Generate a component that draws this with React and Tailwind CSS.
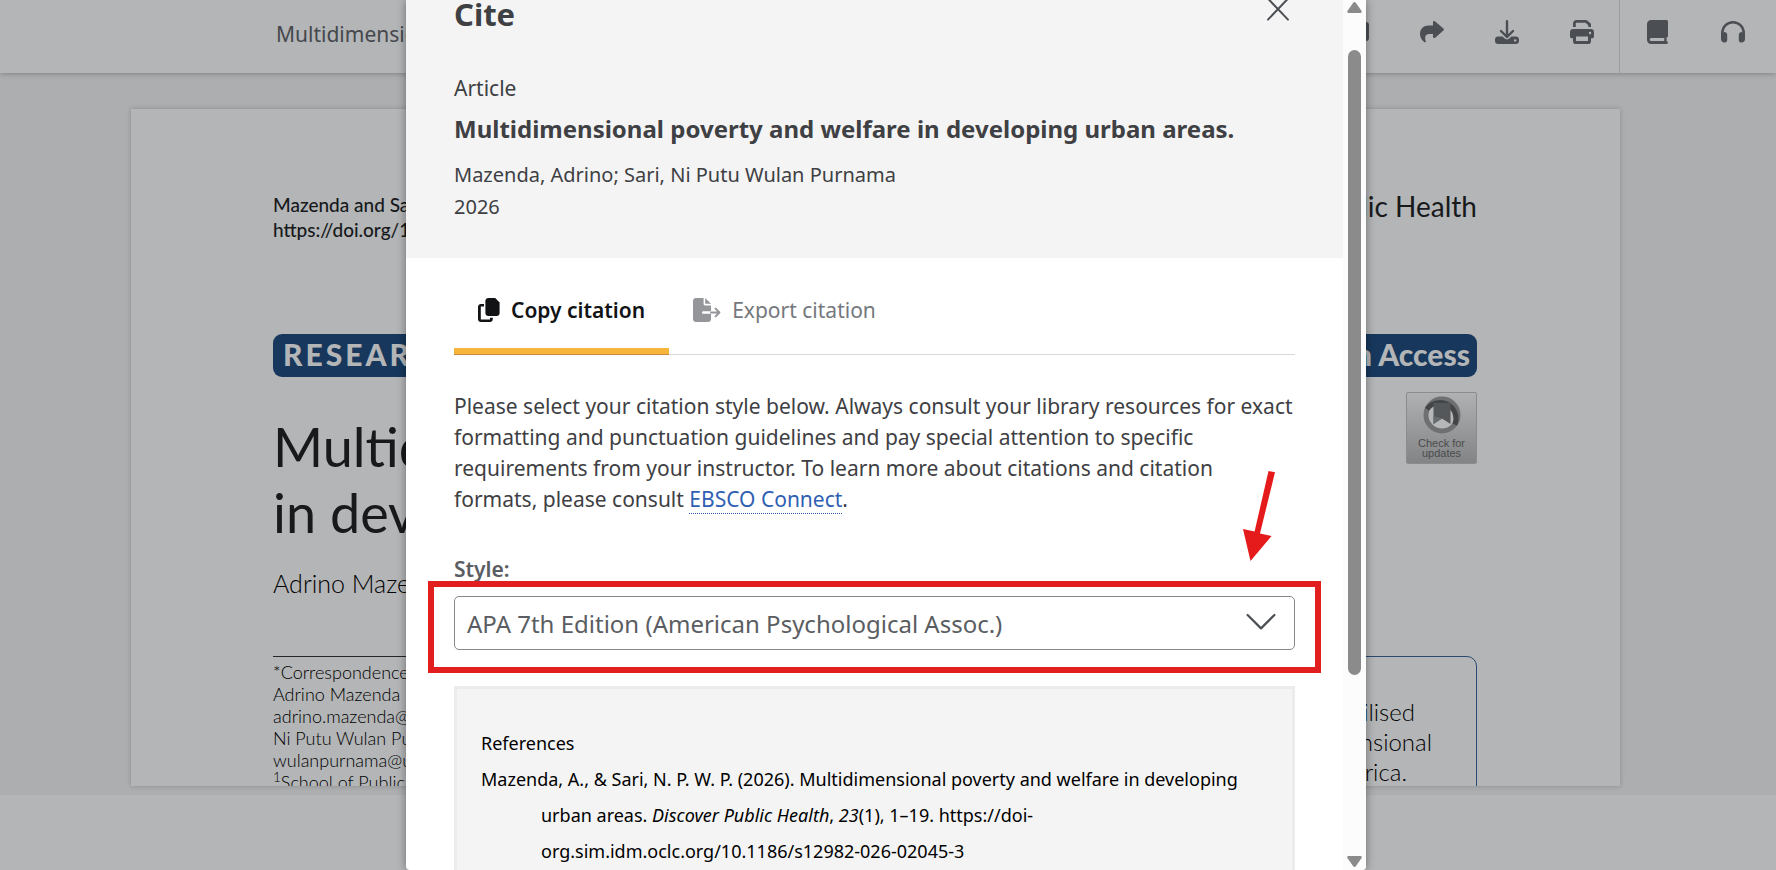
function ShareIcon() {
  return (
    <svg width="24" height="22" viewBox="0 0 24 22" fill="currentColor" aria-hidden="true">
      <path d="M13.2 0.6 C13.8 -0.1 14.6 0 15.2 0.5 L23.4 7.6 C24.1 8.2 24.1 9 23.4 9.6 L15.2 16.8 C14.4 17.4 13 17 13 15.8 V13 H9.5 C6 13 4.7 15.2 5.3 18.4 C5.5 19.6 6 20.4 5.7 21 C5.4 21.5 4.8 21.5 4.2 21 C1.4 18.9 0 16 0 12.8 C0 7.8 3.6 4.5 9 4.5 H13 V1.6 C13 1.2 13 0.9 13.2 0.6 Z" />
    </svg>
  );
}

function DownloadIcon() {
  return (
    <svg width="24" height="24" viewBox="0 0 24 24" aria-hidden="true">
      <path d="M12 1.2 V16 M6 11 L12 17 L18 11" fill="none" stroke="currentColor" strokeWidth="2.4" strokeLinecap="round" strokeLinejoin="round" />
      <path fillRule="evenodd" fill="currentColor" d="M3 16.5 H7.6 L9.4 18.3 C11 19.8 13 19.8 14.6 18.3 L16.4 16.5 H21 C22.7 16.5 24 17.8 24 19.4 V21 C24 22.7 22.7 24 21 24 H3 C1.3 24 0 22.7 0 21 V19.4 C0 17.8 1.3 16.5 3 16.5 Z M20.2 19.2 A1.2 1.2 0 1 0 20.2 21.6 A1.2 1.2 0 1 0 20.2 19.2 Z" />
    </svg>
  );
}

function PrintIcon() {
  return (
    <svg width="24" height="24" viewBox="0 0 24 24" aria-hidden="true">
      <path d="M4.4 7 V3.6 C4.4 2.1 5.4 1.4 6.8 1.4 H16 L19.6 4.4 V7" fill="none" stroke="currentColor" strokeWidth="2.8" strokeLinecap="butt" strokeLinejoin="round" />
      <path fillRule="evenodd" fill="currentColor" d="M3 9 H21 C22.7 9 24 10.3 24 12 V16.6 C24 17.6 23.2 18.2 22.4 18.2 H21 V21.4 C21 22.9 19.9 24 18.4 24 H5.6 C4.1 24 3 22.9 3 21.4 V18.2 H1.6 C0.8 18.2 0 17.6 0 16.6 V12 C0 10.3 1.3 9 3 9 Z M6 16.4 V21 H18 V16.4 Z M20 11.8 A1.2 1.2 0 1 0 20 14.2 A1.2 1.2 0 1 0 20 11.8 Z" />
    </svg>
  );
}

function BookIcon() {
  return (
    <svg width="21" height="24" viewBox="0 0 21 24" aria-hidden="true">
      <path fillRule="evenodd" fill="currentColor" d="M4 0 H19.4 C20.4 0 21 0.7 21 1.6 V15.8 C21 16.8 20.4 17.4 19.6 17.6 V21.2 C20.6 21.4 21 21.9 21 22.6 C21 23.4 20.4 24 19.6 24 H4 C1.8 24 0 22.3 0 20 V4 C0 1.8 1.8 0 4 0 Z M4.2 18 C2.3 18 2.3 21.1 4.2 21.1 H17.2 V18 Z" />
    </svg>
  );
}

function HeadphonesIcon() {
  return (
    <svg width="24" height="22" viewBox="0 0 24 22" aria-hidden="true">
      <path d="M1.2 16 V12.2 C1.2 6 6 1.2 12 1.2 C18 1.2 22.8 6 22.8 12.2 V16" fill="none" stroke="currentColor" strokeWidth="2.4" />
      <path fill="currentColor" d="M3 11 C5 11 6.2 12.2 6.2 13.8 V19 C6.2 20.6 5 21.6 3.4 21.6 C1.4 21.6 0 20 0 18 V14 Z M21 11 C19 11 17.8 12.2 17.8 13.8 V19 C17.8 20.6 19 21.6 20.6 21.6 C22.6 21.6 24 20 24 18 V14 Z" />
    </svg>
  );
}

function FolderIcon() {
  return (
    <svg width="24" height="20" viewBox="0 0 24 20" aria-hidden="true">
      <rect x="0" y="0" width="24" height="19" rx="3" fill="currentColor" />
    </svg>
  );
}

function CopyIcon() {
  return (
    <svg width="22" height="24" viewBox="0 0 22 24" aria-hidden="true">
      <path fill="currentColor" d="M10.4 0 H17.2 L21.6 4.4 V15 C21.6 16.7 20.3 18 18.6 18 H10.4 C8.7 18 7.4 16.7 7.4 15 V3 C7.4 1.3 8.7 0 10.4 0 Z" />
      <path fill="currentColor" d="M3 6 H6 V8.6 H2.8 V21.4 H12 V19.8 H14.8 V21 C14.8 22.7 13.6 24 12 24 H3 C1.3 24 0 22.7 0 21 V9 C0 7.3 1.3 6 3 6 Z" />
    </svg>
  );
}

function ExportIcon() {
  return (
    <svg width="28" height="24" viewBox="0 0 28 24" aria-hidden="true">
      <path fill="currentColor" d="M3 0 H10.6 V6 C10.6 6.8 11.2 7.4 12 7.4 H18 V13.2 H10 C8.6 13.2 8.6 15.8 10 15.8 H18 V21 C18 22.7 16.7 24 15 24 H3 C1.3 24 0 22.7 0 21 V3 C0 1.3 1.3 0 3 0 Z M12.2 0 L18 5.8 H12.2 Z" />
      <path d="M18 14.5 H26 M22.6 10.6 L26.4 14.5 L22.6 18.4" fill="none" stroke="currentColor" strokeWidth="2" strokeLinecap="round" strokeLinejoin="round" />
    </svg>
  );
}

function UpdatesBadge() {
  return (
    <button className="flex h-[72px] w-[71px] flex-col items-center rounded-[2px] border border-[#8b8c8d] bg-linear-to-b from-[#b0b1b2] to-[#838485] pt-[3px] font-['Liberation_Sans',sans-serif] text-[11px] leading-[10px] text-[#4a4b4c]">
      <svg width="38" height="38" viewBox="0 0 38 38" aria-hidden="true">
        <circle cx="19" cy="19" r="14" fill="#b6b7b8" />
        <circle cx="19" cy="19" r="16" fill="none" stroke="#6f7072" strokeWidth="5" />
        <path d="M4 13.2 A16 16 0 0 1 31.8 28.6" fill="none" stroke="#434547" strokeWidth="5" />
        <path d="M10.5 7 H27.5 V28 L19 22.5 L10.5 28 Z" fill="#55585a" />
        <path d="M10.5 20 L19 22.5 L10.5 28 Z" fill="#696c6e" />
      </svg>
      <span className="pt-1">Check for</span>
      <span>updates</span>
    </button>
  );
}

function ToolButton({ label, children }) {
  return (
    <button aria-label={label} className="flex h-16 w-[75px] items-center justify-center">
      {children}
    </button>
  );
}

function Toolbar() {
  return (
    <header className="relative flex h-[73px] shrink-0 justify-between bg-[#b3b5b7] pr-[6px] text-[#4b4f54] shadow-[0_1px_5px_rgba(0,0,0,0.25)]">
      <p className="pt-[18px] pl-[276px] text-[21px] leading-8 text-[#45484c]">
        Multidimensional poverty and welfare in developing urban areas.
      </p>
      <div className="flex">
        <ToolButton label="Add to project"><FolderIcon /></ToolButton>
        <ToolButton label="Share"><ShareIcon /></ToolButton>
        <ToolButton label="Download"><DownloadIcon /></ToolButton>
        <ToolButton label="Print"><PrintIcon /></ToolButton>
        <div className="flex border-l border-[#9c9ea0]">
          <ToolButton label="Contents"><BookIcon /></ToolButton>
          <ToolButton label="Listen"><HeadphonesIcon /></ToolButton>
        </div>
      </div>
    </header>
  );
}

function ArticlePage() {
  return (
    <main className="flex min-h-0 flex-1 flex-col bg-[#adaeb0] pt-9 pr-[156px] pb-[9px] pl-[131px]">
      <article className="min-h-0 flex-1 overflow-hidden bg-[#b3b5b7] pr-[143px] pl-[142px] font-['Lato','Noto_Sans',sans-serif] text-[#17191b] shadow-[0_0_5px_rgba(0,0,0,0.2)]">
        <div className="flex justify-between pt-[83px]">
          <p className="text-[19px] leading-[25px] font-medium">
            Mazenda and Sari Discover Public Health
            <br />
            https://doi.org/10.1186/s12982-026-02045-3
          </p>
          <p className="text-[28px] leading-7">Discover Public Health</p>
        </div>
        <div className="mt-[92px] flex h-[43px] items-center justify-between rounded-[9px] bg-[#17385c] pr-[7px] pb-[2px] pl-[10px] text-[30px] font-black text-[#b3b5b7]">
          <span className="tracking-[3px]">RESEARCH</span>
          <span>Open Access</span>
        </div>
        <div className="mt-[15px] flex items-start justify-between">
          <h1 className="pt-[22px] text-[54px] leading-[66px]">
            Multidimensional poverty and welfare
            <br />
            in developing urban areas
          </h1>
          <UpdatesBadge />
        </div>
        <p className="mt-[21px] text-[25px] leading-[32px] font-light text-black">Adrino Mazenda and Ni Putu Wulan Purnama Sari</p>
        <div className="mt-[57px] flex items-start justify-between text-black">
          <address className="w-[420px] border-t border-[#25282b] pt-1 text-[18px] leading-[22px] font-light not-italic">
            *Correspondence:
            <br />
            Adrino Mazenda
            <br />
            adrino.mazenda@up.ac.za
            <br />
            Ni Putu Wulan Purnama Sari
            <br />
            wulanpurnama@ukwms.ac.id
            <br />
            <sup>1</sup>School of Public Management
          </address>
          <div className="h-60 w-[720px] rounded-[10px] border border-[#2b4a6e] pt-10 pr-[44px] text-right text-[24px] leading-[30px] font-light">
            <p className="pr-[17px]">utilised</p>
            <p>multidimensional</p>
            <p className="pr-[25px]">South Africa.</p>
          </div>
        </div>
      </article>
    </main>
  );
}

function CiteDialog() {
  return (
    <section role="dialog" aria-label="Cite" className="flex w-[960px] overflow-hidden rounded-b-[4px] bg-white shadow-[0_0_10px_rgba(0,0,0,0.4)]">
      <div className="min-w-0 flex-1">
        <div className="bg-[#f4f4f4] px-12 pb-[35px] text-[20px] leading-8 text-[#3e4043]">
          <div className="flex items-start justify-between">
            <h2 className="text-[31px] leading-7 font-bold">Cite</h2>
            <button aria-label="Close" className="mr-[5px]">
              <svg width="24" height="21" viewBox="0 3 24 21" fill="none" stroke="#4b4f54" strokeWidth="2" strokeLinecap="round" aria-hidden="true">
                <path d="M2 1.6 L22 22.6 M22 1.6 L2 22.6" />
              </svg>
            </button>
          </div>
          <p className="mt-11 text-[21px]">Article</p>
          <h3 className="mt-2 text-[24px] leading-[34px] font-bold">
            Multidimensional poverty and welfare in developing urban areas.
          </h3>
          <p className="mt-[13px]">Mazenda, Adrino; Sari, Ni Putu Wulan Purnama</p>
          <p>2026</p>
        </div>
        <div className="px-12">
          <div role="tablist" className="flex border-b border-[#d9d9d9] text-[21px] leading-8">
            <button role="tab" aria-selected="true" className="-mb-px border-b border-[#c98a3a] font-semibold text-[#111315]">
              <span className="flex items-center gap-[11px] border-b-[6px] border-[#f8b53c] px-6 pt-9 pb-[22px]">
                <CopyIcon />
                Copy citation
              </span>
            </button>
            <button role="tab" aria-selected="false" className="flex items-center gap-[11px] px-6 pt-9 pb-7 text-[#75787c]">
              <span className="text-[#94969a]"><ExportIcon /></span>
              Export citation
            </button>
          </div>
          <p className="mt-9 text-[21px] leading-[31px] text-[#3e4043]">
            Please select your citation style below. Always consult your library resources for exact formatting and punctuation guidelines and pay special attention to specific requirements from your instructor. To learn more about citations and citation formats, please consult{" "}
            <a href="#connect" className="border-b border-dotted border-[#2f5ba8] text-[#2f5fb3]">EBSCO Connect</a>.
          </p>
          <label htmlFor="style" className="mt-10 block text-[21px] leading-7 font-semibold text-[#5a5d61]">Style:</label>
          <div className="relative mt-[13px]">
            <select id="style" className="block h-[54px] w-full appearance-none rounded-[5px] border border-[#87898c] bg-white px-3 pt-[2px] text-[24px] text-[#5a5d61]">
              <option>APA 7th Edition (American Psychological Assoc.)</option>
            </select>
            <svg className="pointer-events-none absolute top-4 right-[18px]" width="32" height="20" viewBox="0 0 32 20" fill="none" stroke="#4b4f54" strokeWidth="2.2" strokeLinecap="round" strokeLinejoin="round" aria-hidden="true">
              <path d="M2.6 3 L16 16.4 L29.4 3" />
            </svg>
            <div className="pointer-events-none absolute -top-[15px] -right-[26px] -bottom-[23px] -left-[26px] border-[6px] border-[#e11f1f]" />
            <svg className="pointer-events-none absolute -top-[126px] right-[19px]" width="34" height="92" viewBox="0 0 34 92" fill="#e51b1b" aria-hidden="true">
              <path d="M26.5 1 L33 2.2 L18 63.5 L29.6 66 L8.5 91 L1 59 L12.6 61.4 Z" />
            </svg>
          </div>
          <div className="mt-9 border-[3px] border-[#ececec] bg-[#f4f4f4] px-6 py-9 text-[18px] leading-9 text-black">
            <p>References</p>
            <p className="pl-[60px] -indent-[60px]">
              Mazenda, A., &amp; Sari, N. P. W. P. (2026). Multidimensional poverty and welfare in developing urban areas. <em>Discover Public Health</em>, <em>23</em>(1), 1–19. https://doi-org.sim.idm.oclc.org/10.1186/s12982-026-02045-3
            </p>
          </div>
        </div>
      </div>
      <div className="flex w-[23px] flex-col items-center bg-[#fcfcfc] pt-[2px] pb-[3px]">
        <svg width="15" height="11" viewBox="0 0 15 11" fill="#8b8b8b" aria-hidden="true">
          <path d="M6.2 0.8 Q7.5 -0.8 8.8 0.8 L14.6 9 Q15.2 10.8 13.6 11 H1.4 Q-0.2 10.8 0.4 9 Z" />
        </svg>
        <div className="flex flex-1 flex-col items-center pt-[37px]">
          <div className="h-[625px] w-[13px] rounded-full bg-[#8b8b8b]" />
        </div>
        <svg width="15" height="11" viewBox="0 0 15 11" fill="#8b8b8b" aria-hidden="true">
          <path d="M6.2 10.2 Q7.5 11.8 8.8 10.2 L14.6 2 Q15.2 0.2 13.6 0 H1.4 Q-0.2 0.2 0.4 2 Z" />
        </svg>
      </div>
    </section>
  );
}

export default function App() {
  return (
    <div className="relative h-screen overflow-hidden bg-[#b3b5b7] font-['Noto_Sans',sans-serif]">
      <div className="flex h-full flex-col pb-[75px]">
        <Toolbar />
        <ArticlePage />
      </div>
      <div className="absolute inset-0 flex justify-center pr-1">
        <CiteDialog />
      </div>
    </div>
  );
}
